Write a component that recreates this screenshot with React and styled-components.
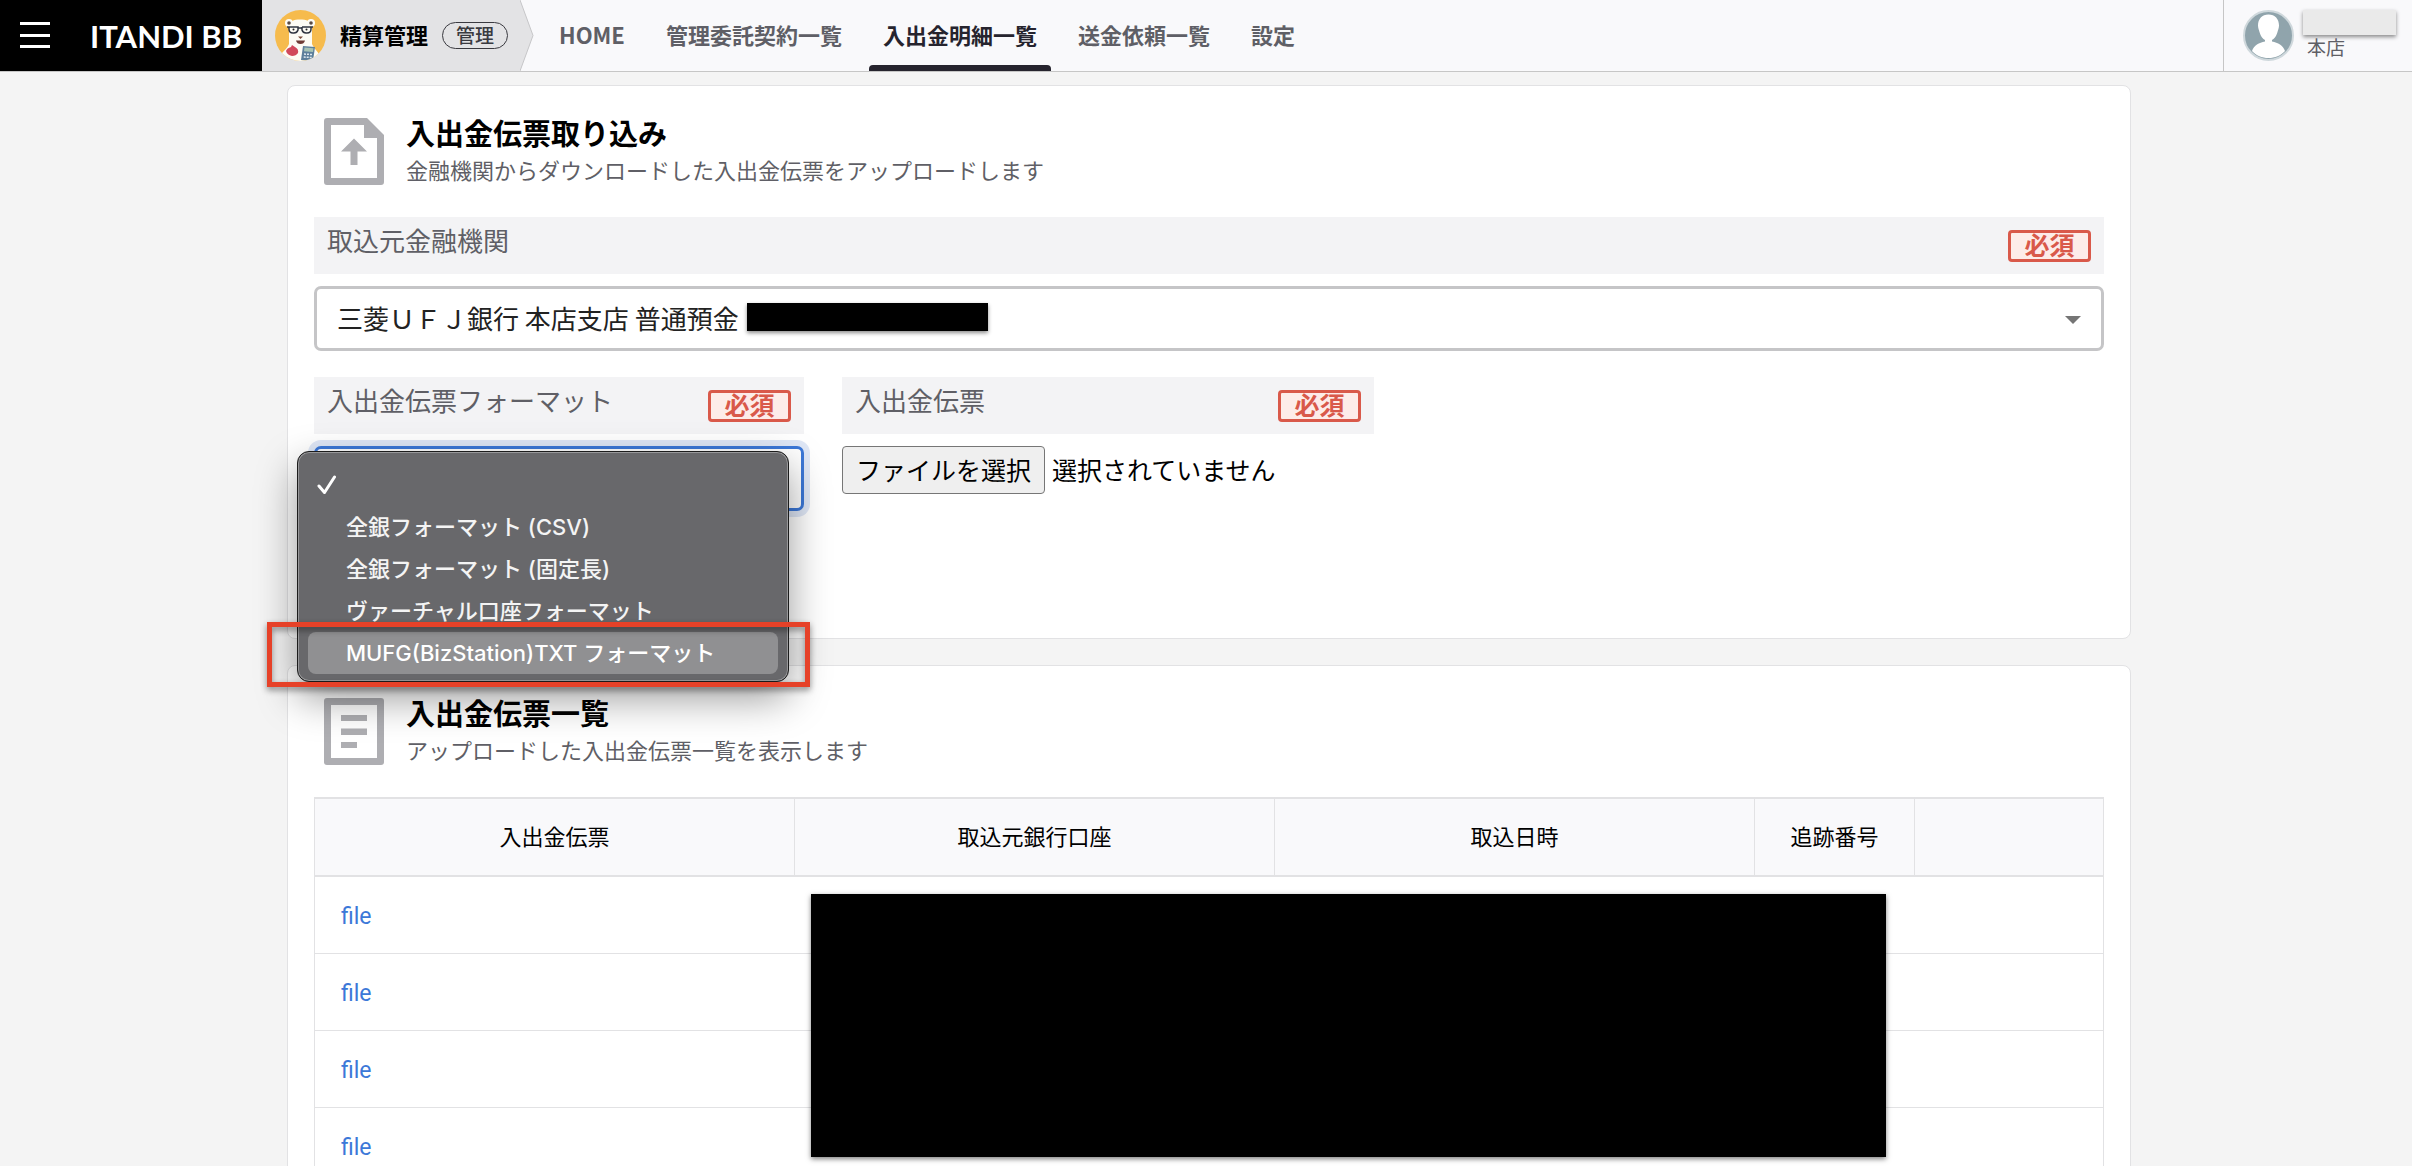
import React, { useRef } from "react";
import styled, { createGlobalStyle } from "styled-components";

const JP = `"Noto Sans CJK JP", sans-serif`;
const MENU = `Inter, "Noto Sans CJK JP", sans-serif`;
const INK = "#5f5f66";
const LINE = "#e2e2e4";
const BLUE = "#3c78d8";

const GlobalStyle = createGlobalStyle`
  *, *::before, *::after { box-sizing: border-box; }
  body { margin: 0; background: #f4f4f4; color: #000; font-family: ${JP}; font-size: 22px; }
  button, select, input { font: inherit; color: inherit; }
`;

const Shell = styled.div`
  display: flex;
  flex-direction: column;
  height: 100vh;
`;

const Header = styled.header`
  display: flex;
  flex: none;
  height: 72px;
  background: #f9f9fb;
  border-bottom: 1px solid #c6c6c6;
`;

const Brand = styled.div`
  display: flex;
  align-items: center;
  gap: 40px;
  width: 262px;
  padding-left: 20px;
  background: #000;
`;

const MenuButton = styled.button`
  display: flex;
  padding: 0;
  border: 0;
  background: none;
`;

const Logo = styled.a`
  color: #fff;
  font: 700 31px/40px Lato, sans-serif;
  text-decoration: none;
  white-space: nowrap;
`;

const Service = styled.div`
  display: flex;
  align-items: center;
  width: 258px;
  padding-left: 13px;
  background: #e3e3e5;
  white-space: nowrap;
`;

const ServiceName = styled.span`
  margin: 0 14px;
  padding-bottom: 3px;
  font-weight: 700;
  line-height: 32px;
`;

const Pill = styled.span`
  padding: 0 13px 2px;
  border: 1px solid #3a3a40;
  border-radius: 14px;
  color: #3a3a40;
  font-size: 19px;
  font-weight: 500;
  line-height: 23px;
`;

const Arrow = styled.svg`
  flex: none;
  width: 14px;
  height: 71px;
`;

const Nav = styled.nav`
  display: flex;
  flex: 1;
  gap: 13px;
  padding-left: 11px;
`;

const NavLink = styled.a`
  position: relative;
  display: flex;
  align-items: center;
  padding: 0 14px 3px;
  color: ${(p) => (p.$active ? "#26242e" : INK)};
  font-weight: 700;
  text-decoration: none;
  white-space: nowrap;
  &::after {
    content: "";
    display: ${(p) => (p.$active ? "block" : "none")};
    position: absolute;
    inset: auto 0 0;
    height: 6px;
    border-radius: 4px 4px 0 0;
    background: #26242e;
  }
`;

const User = styled.div`
  display: flex;
  gap: 9px;
  width: 189px;
  padding: 10px 16px 0 19px;
  border-left: 1px solid #c6c6c6;
`;

const UserText = styled.div`
  display: flex;
  flex: 1;
  flex-direction: column;
  color: ${INK};
  font-size: 19px;
  line-height: 23px;
`;

const UserName = styled.span`
  height: 25px;
  background: #eaeaea;
  box-shadow: 0 2px 4px rgba(0, 0, 0, 0.45);
`;

const Branch = styled.span`
  padding-left: 4px;
`;

const Main = styled.main`
  display: flex;
  flex: 1;
  flex-direction: column;
  gap: 26px;
  padding: 13px 281px 0 287px;
  overflow: auto;
  scrollbar-width: none;
`;

const Card = styled.section`
  flex: none;
  padding: 27px 26px ${(p) => p.$bottom};
  border: 1px solid ${LINE};
  border-radius: 8px;
  background: #fff;
`;

const CardHead = styled.div`
  display: flex;
  align-items: center;
  gap: 22px;
  margin-bottom: 28px;
  padding-left: 10px;
`;

const CardText = styled.div`
  padding-bottom: 2px;
`;

const CardTitle = styled.h2`
  margin: 0;
  font-size: 29px;
  font-weight: 700;
  line-height: 38px;
`;

const CardNote = styled.p`
  margin: 0;
  color: ${INK};
  line-height: 36px;
`;

const FieldRow = styled.div`
  display: flex;
  gap: 38px;
  margin-top: 26px;
`;

const Field = styled.div`
  position: relative;
  width: ${(p) => p.$width || "auto"};
`;

const FieldHead = styled.div`
  display: flex;
  align-items: center;
  justify-content: space-between;
  height: 57px;
  margin-bottom: 12px;
  padding: 0 13px;
  background: #f3f3f5;
`;

const FieldLabel = styled.label`
  padding-bottom: 11px;
  color: ${INK};
  font-size: 26px;
  line-height: 40px;
`;

const Required = styled.span`
  width: 83px;
  padding-bottom: 4px;
  border: 3px solid #d9594a;
  border-radius: 4px;
  background: #fdece9;
  color: #d9594a;
  font-size: 25px;
  font-weight: 700;
  line-height: 22px;
  text-align: center;
`;

const SelectBox = styled.div`
  position: relative;
`;

const Select = styled.select`
  display: block;
  width: 100%;
  height: 65px;
  padding: 0 60px 3px 20px;
  border: 3px solid ${(p) => (p.$open ? BLUE : "#c5c5c7")};
  border-radius: 7px;
  outline: 0;
  box-shadow: ${(p) => (p.$open ? "0 0 0 6px #dfe7f6" : "none")};
  background: #fff;
  color: #222;
  font-size: 26px;
  appearance: none;
`;

const Caret = styled.svg`
  position: absolute;
  top: 30px;
  right: 23px;
  width: 16px;
  height: 8px;
`;

const AccountMask = styled.span`
  position: absolute;
  top: 17px;
  left: 433px;
  width: 241px;
  height: 28px;
  background: #000;
  box-shadow: 0 2px 4px rgba(0, 0, 0, 0.45);
`;

const FilePicker = styled.div`
  display: flex;
  align-items: center;
  gap: 7px;
  margin-top: 1px;
  font-size: 25px;
`;

const FileButton = styled.button`
  height: 48px;
  padding: 0 13px 3px;
  border: 1px solid #767676;
  border-radius: 4px;
  background: #efefef;
  line-height: 40px;
`;

const FileStatus = styled.span`
  padding-bottom: 2px;
  line-height: 46px;
`;

const Options = styled.ul`
  position: absolute;
  z-index: 2;
  top: 74px;
  left: -17px;
  width: 492px;
  margin: 0;
  padding: 12px 10px 7px;
  border: 1px solid #1c1c1c;
  border-radius: 12px;
  background: #68686b;
  box-shadow: inset 0 0 0 1px #98989a, 0 16px 40px rgba(0, 0, 0, 0.4);
  color: #f4f4f4;
  font: 500 22px/42px ${MENU};
  list-style: none;
`;

const Option = styled.li`
  position: relative;
  height: 42px;
  padding-left: 38px;
  border-radius: 8px;
  background: ${(p) => (p.$active ? "#909092" : "transparent")};
  color: ${(p) => (p.$active ? "#fff" : "inherit")};
  white-space: nowrap;
`;

const Tick = styled.svg`
  position: absolute;
  top: 11px;
  left: 9px;
  width: 20px;
  height: 20px;
`;

const Callout = styled.span`
  position: absolute;
  inset: -10px -32px -13px -41px;
  border: 5px solid #e64128;
  filter: drop-shadow(0 3px 3px rgba(0, 0, 0, 0.45));
`;

const TableBox = styled.div`
  position: relative;
`;

const Table = styled.table`
  width: 100%;
  border-collapse: separate;
  border-spacing: 0;
  border: 1px solid ${LINE};
  border-top-width: 2px;
  table-layout: fixed;
`;

const Th = styled.th`
  width: ${(p) => p.$width || "auto"};
  height: 78px;
  padding: 0 0 4px;
  border-right: 1px solid ${LINE};
  border-bottom: 2px solid ${LINE};
  background: #f9f9fb;
  font-weight: 400;
  line-height: 32px;
  &:last-child { border-right: 0; }
`;

const Td = styled.td`
  height: 77px;
  padding: 0 26px;
  border-bottom: 1px solid ${LINE};
  line-height: 32px;
`;

const FileLink = styled.a`
  color: ${BLUE};
  font-family: Roboto, sans-serif;
  font-size: 23px;
  text-decoration: none;
`;

const RowsMask = styled.div`
  position: absolute;
  top: 97px;
  right: 218px;
  left: 497px;
  height: 263px;
  background: #000;
  box-shadow: 0 2px 5px rgba(0, 0, 0, 0.5);
`;

const Picture = styled.svg`
  flex: none;
  width: 51px;
  height: 51px;
`;

function Bear() {
  return (
    <Picture viewBox="0 0 51 51" aria-hidden="true">
      <defs><clipPath id="bear"><circle cx="25.500" cy="25.500" r="25.500" /></clipPath></defs>
      <g clipPath="url(#bear)">
        <rect width="51" height="51" fill="#f6bb4d" />
        <path d="M3 51C6 41 12 40 14 34V18C14 11 19 9.500 25 9.500S37 11 37 18V34C39 39 45 43 48 51Z" fill="#fdfcf5" />
        <circle cx="14" cy="13" r="4" fill="#fdfcf5" />
        <circle cx="36" cy="13" r="4" fill="#fdfcf5" />
        <circle cx="14" cy="13" r="1.800" fill="#5a4a44" />
        <circle cx="36" cy="13" r="1.800" fill="#5a4a44" />
        <g fill="none" stroke="#2f3440" strokeWidth="1.500">
          <path d="M12 17H23V20Q22 23 19 23H18Q14 23 14 19V17M27 17H38M27 17V20Q28 23 31 23H32Q36 23 36 19V17M23 18H27" />
        </g>
        <circle cx="18.500" cy="19.500" r="1" fill="#222" />
        <circle cx="31.500" cy="19.500" r="1" fill="#222" />
        <path d="M23 26.500H28L25.500 29Z" fill="#7a4a3a" />
        <path d="M21 30.500H30Q29 34 25.500 34T21 30.500Z" fill="#6e3b35" />
        <path d="M11 41Q12 38 16 37L17 35L20 37Q24 39 23 43Q21 46 17 46Q12 45 11 41Z" fill="#d1495b" />
        <path d="M28 36L40 37L38 51L26 50Z" fill="#5c7f9b" />
        <path d="M29.500 37.500L38.500 38.200L38 42L29 41.300Z" fill="#a7c4b5" />
        <path d="M29 44L37.500 44.600M28.700 47L37 47.600" stroke="#dfe9ef" strokeWidth="1.500" strokeDasharray="2 1" />
      </g>
    </Picture>
  );
}

function Person() {
  return (
    <Picture viewBox="0 0 51 51" aria-hidden="true">
      <circle cx="25.500" cy="25.500" r="24.500" fill="#90a4ac" stroke="#cfd8dc" strokeWidth="2" />
      <path d="M25.500 4.500C32 4.500 36 9 36 15.500C36 18 35 20 34.500 22C33 27 31 29 29 30V31.500C35 33 40 35 42 41C38 45.500 32 48 25.500 48S13 45.500 9 41C11 35 16 33 22 31.500V30C20 29 18 27 16.500 22C16 20 15 18 15 15.500C15 9 19 4.500 25.500 4.500Z" fill="#fff" />
    </Picture>
  );
}

function UploadIcon() {
  return (
    <svg width="60" height="67" viewBox="0 0 60 67" aria-hidden="true">
      <path fillRule="evenodd" fill="#aeaeb2" d="M3 0H43L60 17V64Q60 67 57 67H3Q0 67 0 64V3Q0 0 3 0ZM7 7V60H53V20H40V7Z" />
      <path fill="#aeaeb2" d="M30 20.500L43 33.500H33.500V47H26.500V33.500H17Z" />
    </svg>
  );
}

function ListIcon() {
  return (
    <svg width="60" height="67" viewBox="0 0 60 67" aria-hidden="true">
      <path fillRule="evenodd" fill="#aeaeb2" d="M3 0H57Q60 0 60 3V64Q60 67 57 67H3Q0 67 0 64V3Q0 0 3 0ZM7 7V60H53V7Z" />
      <path fill="#aeaeb2" d="M17 17H43V23H17ZM17 30.500H43V37H17ZM17 44H33V50H17Z" />
    </svg>
  );
}

const NAV = ["HOME", "管理委託契約一覧", "入出金明細一覧", "送金依頼一覧", "設定"];
const FORMATS = [
  "",
  "全銀フォーマット (CSV)",
  "全銀フォーマット (固定長)",
  "ヴァーチャル口座フォーマット",
  "MUFG(BizStation)TXT フォーマット",
];
const COLUMNS = [
  ["入出金伝票", "480px"],
  ["取込元銀行口座", "480px"],
  ["取込日時", "480px"],
  ["追跡番号", "160px"],
  ["", undefined],
];

export default function App() {
  const file = useRef(null);
  return (
    <Shell>
      <GlobalStyle />
      <Header>
        <Brand>
          <MenuButton aria-label="メニュー">
            <svg width="30" height="27" viewBox="0 0 30 27">
              <path d="M0 0H30V3H0ZM0 12H30V15H0ZM0 23H30V26H0Z" fill="#fff" />
            </svg>
          </MenuButton>
          <Logo href="#">ITANDI BB</Logo>
        </Brand>
        <Service>
          <Bear />
          <ServiceName>精算管理</ServiceName>
          <Pill>管理</Pill>
        </Service>
        <Arrow viewBox="0 0 14 71" aria-hidden="true">
          <path d="M0 0L13 35.500L0 71Z" fill="#e3e3e5" />
          <path d="M0 0L13 35.500L0 71" fill="none" stroke="#c6c6c8" />
        </Arrow>
        <Nav>
          {NAV.map((name) => (
            <NavLink key={name} href="#" $active={name === "入出金明細一覧"}>{name}</NavLink>
          ))}
        </Nav>
        <User>
          <Person />
          <UserText>
            <UserName />
            <Branch>本店</Branch>
          </UserText>
        </User>
      </Header>

      <Main>
        <Card $bottom="127px">
          <CardHead>
            <UploadIcon />
            <CardText>
              <CardTitle>入出金伝票取り込み</CardTitle>
              <CardNote>金融機関からダウンロードした入出金伝票をアップロードします</CardNote>
            </CardText>
          </CardHead>
          <Field>
            <FieldHead>
              <FieldLabel htmlFor="bank">取込元金融機関</FieldLabel>
              <Required>必須</Required>
            </FieldHead>
            <SelectBox>
              <Select id="bank">
                <option>三菱ＵＦＪ銀行 本店支店 普通預金</option>
              </Select>
              <AccountMask />
              <Caret viewBox="0 0 16 8" aria-hidden="true"><path d="M0 0H16L8 8Z" fill="#757575" /></Caret>
            </SelectBox>
          </Field>
          <FieldRow>
            <Field $width="490px">
              <FieldHead>
                <FieldLabel htmlFor="format">入出金伝票フォーマット</FieldLabel>
                <Required>必須</Required>
              </FieldHead>
              <Select id="format" $open>
                <option value="" />
              </Select>
              <Options role="listbox" aria-label="入出金伝票フォーマット">
                {FORMATS.map((name, i) => {
                  const active = i === FORMATS.length - 1;
                  return (
                    <Option key={i} role="option" aria-selected={i === 0} $active={active}>
                      {i === 0 && (
                        <Tick viewBox="0 0 20 20" aria-hidden="true">
                          <path d="M2 11L7.500 17.500L17.500 2" fill="none" stroke="#fff" strokeWidth="3" strokeLinecap="round" strokeLinejoin="round" />
                        </Tick>
                      )}
                      {name}
                      {active && <Callout />}
                    </Option>
                  );
                })}
              </Options>
            </Field>
            <Field $width="532px">
              <FieldHead>
                <FieldLabel htmlFor="slip">入出金伝票</FieldLabel>
                <Required>必須</Required>
              </FieldHead>
              <FilePicker>
                <input id="slip" type="file" ref={file} hidden />
                <FileButton type="button" onClick={() => file.current.click()}>ファイルを選択</FileButton>
                <FileStatus>選択されていません</FileStatus>
              </FilePicker>
            </Field>
          </FieldRow>
        </Card>

        <Card $bottom="27px">
          <CardHead>
            <ListIcon />
            <CardText>
              <CardTitle>入出金伝票一覧</CardTitle>
              <CardNote>アップロードした入出金伝票一覧を表示します</CardNote>
            </CardText>
          </CardHead>
          <TableBox>
            <Table>
              <thead>
                <tr>
                  {COLUMNS.map(([name, width], i) => <Th key={i} $width={width}>{name}</Th>)}
                </tr>
              </thead>
              <tbody>
                {[1, 2, 3, 4].map((row) => (
                  <tr key={row}>
                    <Td><FileLink href="#">file</FileLink></Td>
                    <Td /><Td /><Td /><Td />
                  </tr>
                ))}
              </tbody>
            </Table>
            <RowsMask />
          </TableBox>
        </Card>
      </Main>
    </Shell>
  );
}
